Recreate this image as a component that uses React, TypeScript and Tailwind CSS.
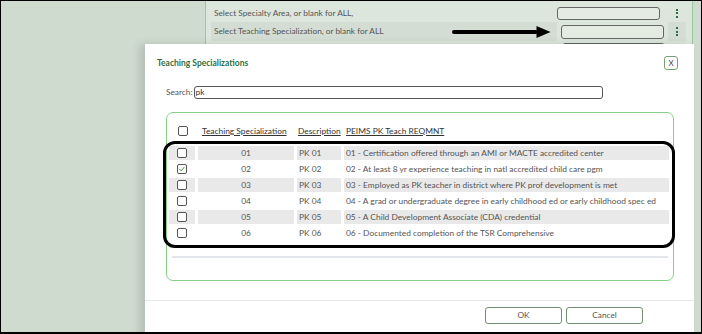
import React from 'react'

const rows = [
  { code: '01', desc: 'PK 01', req: '01 - Certification offered through an AMI or MACTE accredited center', checked: false },
  { code: '02', desc: 'PK 02', req: '02 - At least 8 yr experience teaching in natl accredited child care pgm', checked: true },
  { code: '03', desc: 'PK 03', req: '03 - Employed as PK teacher in district where PK prof development is met', checked: false },
  { code: '04', desc: 'PK 04', req: '04 - A grad or undergraduate degree in early childhood ed or early childhood spec ed', checked: false },
  { code: '05', desc: 'PK 05', req: '05 - A Child Development Associate (CDA) credential', checked: false },
  { code: '06', desc: 'PK 06', req: '06 - Documented completion of the TSR Comprehensive', checked: false },
]

function Box({ checked }: { checked?: boolean }) {
  return (
    <span className="flex h-[10px] w-[10px] items-center justify-center rounded-[2px] border border-[#555] bg-white">
      {checked && (
        <svg viewBox="0 0 10 10" className="h-[8px] w-[8px]">
          <path d="M2 5.2 L4 7.4 L8 2.4" fill="none" stroke="#3c8a3c" strokeWidth="1.2" />
        </svg>
      )}
    </span>
  )
}

function Dots() {
  return (
    <div className="flex flex-col items-center gap-[1.5px]">
      <span className="h-[2px] w-[2px] bg-[#2f6f3f]" />
      <span className="h-[2px] w-[2px] bg-[#2f6f3f]" />
      <span className="h-[2px] w-[2px] bg-[#2f6f3f]" />
    </div>
  )
}

export default function App() {
  return (
    <div
      className="relative h-[334px] w-[702px] overflow-hidden border border-b-2 border-black bg-[#d0dbd0] text-[8px]"
      style={{ fontFamily: 'Lato, "Open Sans", sans-serif' }}
    >
      {/* page behind the dialog */}
      <div className="ml-[204px] mr-[8px] h-full border-x border-[#9cc79c] bg-[#dde6dd] pl-[5px] pt-[3px] text-[8.3px] text-[#555]">
        <div className="flex h-[18px] items-center">
          <div className="flex-1 pl-[3px]">Select Specialty Area, or blank for ALL,</div>
          <div className="mr-[8px] h-[13px] w-[103px] rounded-[3px] border border-[#666] bg-[#e3ebe3]" />
          <div className="flex w-[18px] justify-center"><Dots /></div>
          <div className="w-[6px]" />
        </div>
        <div className="flex h-[19px] items-center">
          <div className="flex h-full flex-1 items-center bg-[#d3ddd3] pl-[3px]">
            Select Teaching Specialization, or blank for ALL
            <div className="ml-auto mr-[6px] flex items-center">
              <span className="h-[4px] w-[86px] rounded-full bg-black" />
              <svg viewBox="0 0 14 12" className="-ml-[2px] h-[12px] w-[15px]">
                <path d="M0 0 L14 6 L0 12 Z" fill="black" />
              </svg>
            </div>
          </div>
          <div className="flex h-full items-center px-[4px]">
            <div className="h-[14px] w-[103px] rounded-[3px] border border-[#666] bg-[#e3ebe3]" />
          </div>
          <div className="flex h-full w-[18px] items-center justify-center bg-[#d3ddd3]"><Dots /></div>
          <div className="w-[6px]" />
        </div>
        <div className="ml-[351px] mt-[2px] h-[6px] w-[103px] rounded-t-[3px] border border-[#666]" />
      </div>

      {/* dialog */}
      <div className="absolute left-[144px] top-[43px] h-[300px] w-[549px] bg-white shadow-[-6px_0_8px_rgba(0,0,0,0.12)]">
        <div className="flex items-start justify-between pl-[12px] pr-[16px] pt-[12px]">
          <div className="pt-[1px] text-[8.5px] font-bold text-[#2f6f3f]">Teaching Specializations</div>
          <button className="flex h-[14px] w-[14px] items-center justify-center rounded-[3px] border border-[#7aa07a] text-[8px] leading-none text-[#444]">
            X
          </button>
        </div>

        <div className="ml-[21px] mt-[16px] flex items-center text-[8.3px] text-[#555]">
          <span className="mr-[1px]">Search:</span>
          <div className="flex h-[13px] w-[409px] items-center rounded-[3px] border border-[#555] pl-[1px] text-[#333]">pk</div>
        </div>

        <div className="ml-[21px] mt-[13px] h-[169px] w-[508px] rounded-[7px] border border-[#86d186] px-[2px] pt-[11px] text-[8.4px]">
          <div className="flex h-[14px] items-center text-[#333]">
            <div className="flex w-[26px] justify-center pl-[2px]"><Box /></div>
            <div className="ml-[7px] w-[95px] underline">Teaching Specialization</div>
            <div className="ml-[1px] w-[48px] underline">Description</div>
            <div className="underline">PEIMS PK Teach REQMNT</div>
          </div>
          <div className="mt-[7px] flex flex-col text-[#555]">
            {rows.map((r, i) => (
              <div key={r.code} className="flex h-[16px] items-stretch gap-[3px] py-[1px]">
                <div className={`flex w-[26px] items-center justify-center ${i % 2 === 0 ? 'bg-[#e9e9e9]' : ''}`}>
                  <Box checked={r.checked} />
                </div>
                <div className={`flex w-[96px] items-center justify-center ${i % 2 === 0 ? 'bg-[#e9e9e9]' : ''}`}>{r.code}</div>
                <div className={`flex w-[44px] items-center pl-[2px] ${i % 2 === 0 ? 'bg-[#e9e9e9]' : ''}`}>{r.desc}</div>
                <div className={`mr-[2px] flex flex-1 items-center pl-[2px] ${i % 2 === 0 ? 'bg-[#e9e9e9]' : ''}`}>{r.req}</div>
              </div>
            ))}
          </div>
          <div className="mx-[3px] mt-[15px] h-[2px] bg-[#e2e6ea]" />
        </div>

        <div className="mt-[19px] h-[1px] bg-[#e6e9ec]" />
        <div className="flex justify-end gap-[4px] pr-[51px] pt-[6px] text-[8.3px] text-[#555]">
          <button className="h-[17px] w-[77px] rounded-[3px] border border-[#6f8f6f]">OK</button>
          <button className="h-[17px] w-[77px] rounded-[3px] border border-[#6f8f6f]">Cancel</button>
        </div>

        {/* annotation outline */}
        <div className="pointer-events-none absolute left-[18px] top-[97px] h-[107px] w-[512px] rounded-[12px] border-[3px] border-black" />
      </div>
    </div>
  )
}
